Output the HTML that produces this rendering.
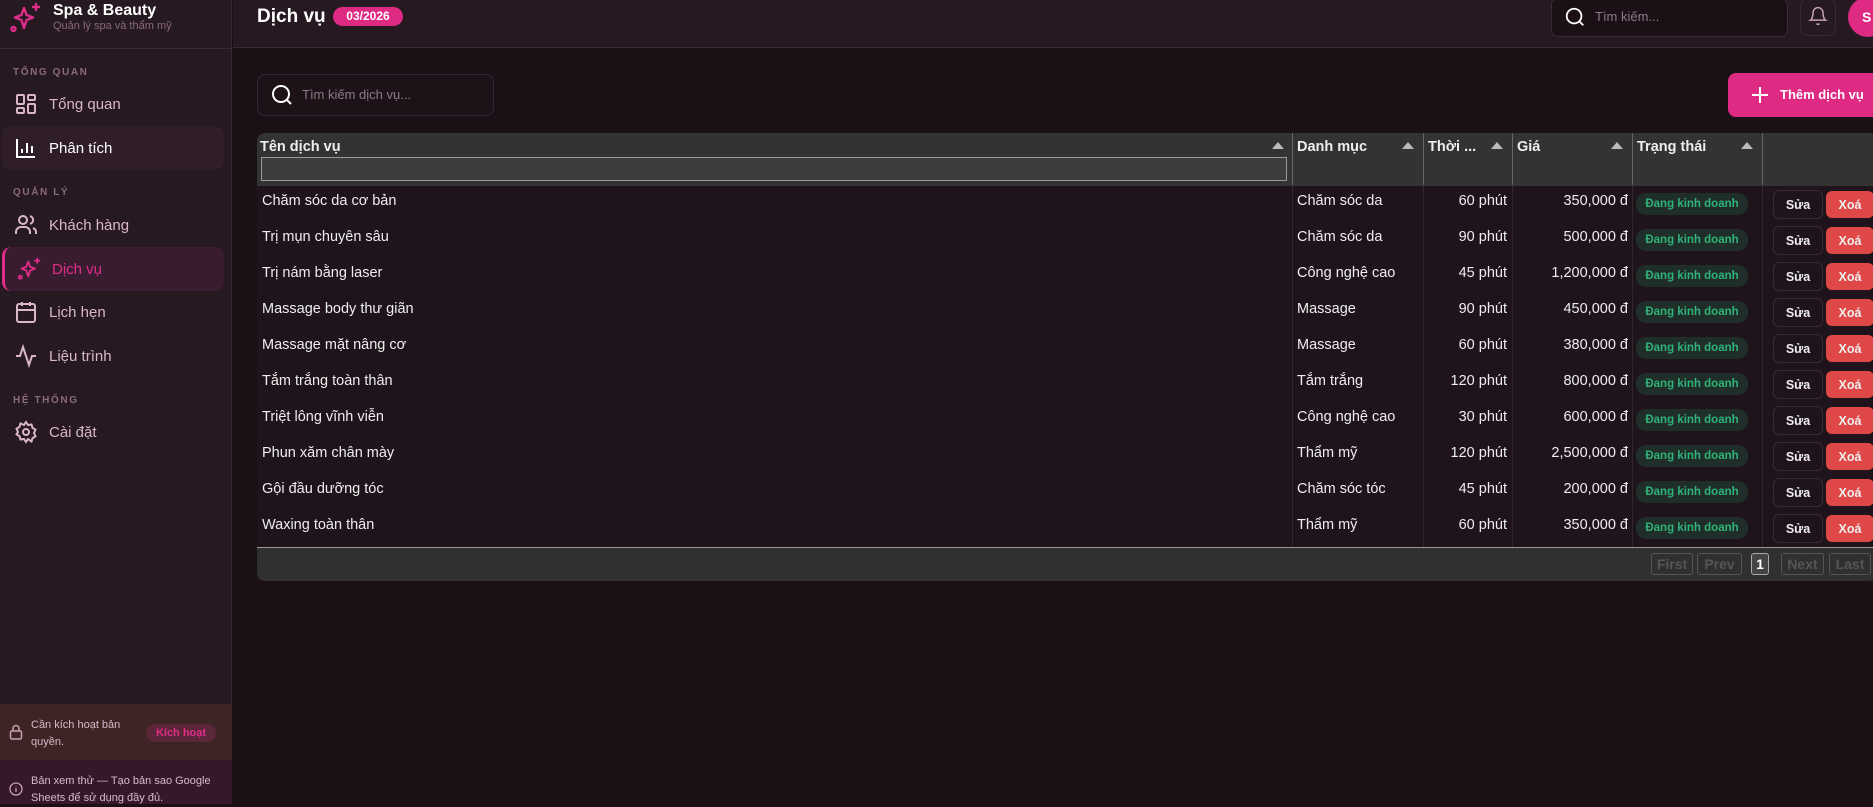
<!DOCTYPE html>
<html><head><meta charset="utf-8"><style>
*{box-sizing:border-box;margin:0;padding:0}
body{width:1873px;height:804px;overflow:hidden;background:#1b1016;font-family:"Liberation Sans","DejaVu Sans",sans-serif;color:#eee;position:relative}
.abs{position:absolute}
#side{left:0;top:0;width:232px;height:804px;background:#261921;border-right:1px solid #3a2a33}
.lbl{position:absolute;left:13px;font-size:10px;letter-spacing:1.6px;color:#8a6a7c;font-weight:bold}
.nav{position:absolute;left:2px;width:222px;height:44px;border-radius:9px;display:flex;align-items:center;font-size:15px;color:#d9b7c9}
.nav svg{position:absolute;left:12px;width:24px;height:24px}
.nav span{position:absolute;left:47px}
#hdr{left:233px;top:0;width:1640px;height:48px;background:#261921;border-bottom:1px solid #3a2a33}
.c{position:absolute;top:0;height:36px;display:flex;align-items:center;white-space:nowrap;font-size:14.5px}
.pill{background:#1f2e29;color:#2fb27a;font-size:11.5px;font-weight:bold;border-radius:10px;height:22px;width:112px;justify-content:center}
.sua{border:1px solid #3a2a33;border-radius:6px;height:29px;width:50px;justify-content:center;font-weight:bold;font-size:12.5px}
.xoa{background:#e04848;border-radius:6px;height:27px;width:48px;justify-content:center;font-weight:bold;font-size:12.5px}
.pg{position:absolute;height:22px;border:1px solid #555;border-radius:3px;color:#555;font-weight:bold;font-size:14px;display:flex;align-items:center;justify-content:center}
.th{position:absolute;top:0;height:52px;border-left:1px solid #666;font-weight:bold;font-size:14.5px;padding:6px 4px}
.tri{position:absolute;top:9px;width:0;height:0;border-left:6px solid transparent;border-right:6px solid transparent;border-bottom:7px solid #bbb}
</style></head><body>
<div id="side" class="abs">
  <svg class="abs" style="left:9px;top:2px" width="32" height="32" viewBox="0 0 32 32" fill="none" stroke="#e02d87" stroke-width="2.4" stroke-linecap="round" stroke-linejoin="round"><path d="M15 6 L17.5 13 L24 15.5 L17.5 18 L15 26 L12.5 18 L6 15.5 L12.5 13 Z"/><path d="M27 2v6M24 5h6"/><circle cx="4.5" cy="27" r="2"/></svg>
  <div class="abs" style="left:53px;top:2px;font-size:16px;font-weight:bold;color:#fff">Spa &amp; Beauty</div>
  <div class="abs" style="left:53px;top:20px;font-size:11px;color:#8a6a7c">Quản lý spa và thẩm mỹ</div>
  <div class="abs" style="left:0;top:48px;width:232px;height:1px;background:#3a2a33"></div>
  <div class="lbl" style="top:67px">TỔNG QUAN</div>
  <div class="nav" style="top:82px"><svg viewBox="0 0 24 24" fill="none" stroke="#d9b7c9" stroke-width="2"><rect x="3" y="3" width="7" height="9" rx="1"/><rect x="14" y="3" width="7" height="5" rx="1"/><rect x="14" y="12" width="7" height="9" rx="1"/><rect x="3" y="16" width="7" height="5" rx="1"/></svg><span>Tổng quan</span></div>
  <div class="nav" style="top:126px;background:#2f1e2a;color:#fff"><svg viewBox="0 0 24 24" fill="none" stroke="#fff" stroke-width="2"><path d="M3 3v18h18M8 17v-4M13 17V7M18 17v-7"/></svg><span>Phân tích</span></div>
  <div class="lbl" style="top:187px">QUẢN LÝ</div>
  <div class="nav" style="top:203px"><svg viewBox="0 0 24 24" fill="none" stroke="#d9b7c9" stroke-width="2"><circle cx="9" cy="7" r="4"/><path d="M2 21v-2a5 5 0 0 1 5-5h4a5 5 0 0 1 5 5v2M16 3.1a4 4 0 0 1 0 7.8M22 21v-2a4 4 0 0 0-3-3.9"/></svg><span>Khách hàng</span></div>
  <div class="nav" style="top:247px;background:#3a1c30;color:#e02d87;border-left:3px solid #e02d87"><svg viewBox="0 0 32 32" fill="none" stroke="#e02d87" stroke-width="2.4" stroke-linecap="round" stroke-linejoin="round"><path d="M15 6 L17.5 13 L24 15.5 L17.5 18 L15 26 L12.5 18 L6 15.5 L12.5 13 Z"/><path d="M27 2v6M24 5h6"/><circle cx="4.5" cy="27" r="2"/></svg><span>Dịch vụ</span></div>
  <div class="nav" style="top:290px"><svg viewBox="0 0 24 24" fill="none" stroke="#d9b7c9" stroke-width="2"><rect x="3" y="4" width="18" height="18" rx="2"/><path d="M16 2v4M8 2v4M3 10h18"/></svg><span>Lịch hẹn</span></div>
  <div class="nav" style="top:334px"><svg viewBox="0 0 24 24" fill="none" stroke="#d9b7c9" stroke-width="2"><path d="M22 12h-4l-3 9L9 3l-3 9H2"/></svg><span>Liệu trình</span></div>
  <div class="lbl" style="top:395px">HỆ THỐNG</div>
  <div class="nav" style="top:410px"><svg viewBox="0 0 24 24" fill="none" stroke="#d9b7c9" stroke-width="2"><circle cx="12" cy="12" r="3"/><path d="M12 2l2 3 3.5-.5 1 3.4 3 1.8-1.5 3.3 1.5 3.3-3 1.8-1 3.4L14 19l-2 3-2-3-3.5.5-1-3.4-3-1.8L4 12 2.5 8.7l3-1.8 1-3.4L10 5z"/></svg><span>Cài đặt</span></div>
  <div class="abs" style="left:0;top:704px;width:232px;height:56px;background:#3d2526"></div>
  <svg class="abs" style="left:9px;top:724px" width="14" height="16" viewBox="0 0 14 16" fill="none" stroke="#c9a0b4" stroke-width="1.5"><rect x="1.5" y="7" width="11" height="8" rx="1.5"/><path d="M4 7V4.5a3 3 0 0 1 6 0V7"/></svg>
  <div class="abs" style="left:31px;top:717px;font-size:11px;line-height:17px;color:#d8b8c8">Cần kích hoạt bản<br>quyền.</div>
  <div class="abs" style="left:146px;top:724px;width:70px;height:18px;border-radius:9px;background:#5a2638;color:#e02d87;font-size:11px;font-weight:bold;text-align:center;line-height:18px">Kích hoạt</div>
  <div class="abs" style="left:0;top:760px;width:232px;height:44px;background:#35192b"></div>
  <svg class="abs" style="left:9px;top:782px" width="14" height="14" viewBox="0 0 14 14" fill="none" stroke="#c9a0b4" stroke-width="1.3"><circle cx="7" cy="7" r="6"/><path d="M7 6v4M7 4v.5"/></svg>
  <div class="abs" style="left:31px;top:773px;font-size:11px;line-height:17px;color:#d8b8c8">Bản xem thử — Tạo bản sao Google<br>Sheets để sử dụng đầy đủ.</div>
</div>
<div id="hdr" class="abs"></div>
<div class="abs" style="left:257px;top:6px;font-size:19px;font-weight:bold;color:#fff">Dịch vụ</div>
<div class="abs" style="left:333px;top:7px;width:70px;height:19px;border-radius:10px;background:#de2a82;color:#fff;font-size:12px;font-weight:bold;text-align:center;line-height:19px">03/2026</div>
<div class="abs" style="left:1551px;top:-2px;width:237px;height:39px;border:1px solid #3a2a33;border-radius:7px;background:#1b1016"></div>
<svg class="abs" style="left:1564px;top:6px" width="22" height="22" viewBox="0 0 24 24" fill="none" stroke="#fff" stroke-width="2"><circle cx="11" cy="11" r="8"/><path d="M21 21l-4.3-4.3"/></svg>
<div class="abs" style="left:1595px;top:9px;font-size:13px;color:#8d7a84">Tìm kiếm...</div>
<div class="abs" style="left:1800px;top:-2px;width:36px;height:38px;border:1px solid #3a2a33;border-radius:8px"></div>
<svg class="abs" style="left:1808px;top:5px" width="20" height="22" viewBox="0 0 24 24" fill="none" stroke="#c9a0b4" stroke-width="1.8"><path d="M6 8a6 6 0 0 1 12 0c0 7 3 9 3 9H3s3-2 3-9M10.3 21a1.9 1.9 0 0 0 3.4 0"/></svg>
<div class="abs" style="left:1848px;top:-3px;width:40px;height:40px;border-radius:50%;background:#de2a82;color:#fff;font-weight:bold;font-size:14px;line-height:40px;padding-left:14px">S</div>

<div class="abs" style="left:257px;top:74px;width:237px;height:42px;border:1px solid #36262f;border-radius:8px;background:#1d1218"></div>
<svg class="abs" style="left:270px;top:83px" width="24" height="24" viewBox="0 0 24 24" fill="none" stroke="#fff" stroke-width="2"><circle cx="11" cy="11" r="8"/><path d="M21 21l-4.3-4.3"/></svg>
<div class="abs" style="left:302px;top:87px;font-size:13px;color:#8d7a84">Tìm kiếm dịch vụ...</div>
<div class="abs" style="left:1728px;top:73px;width:160px;height:44px;border-radius:8px;background:#de2a82"></div>
<svg class="abs" style="left:1750px;top:85px" width="20" height="20" viewBox="0 0 20 20" stroke="#fff" stroke-width="2"><path d="M10 2v16M2 10h16"/></svg>
<div class="abs" style="left:1780px;top:87px;font-size:13px;font-weight:bold;color:#fff">Thêm dịch vụ</div>

<div class="abs" style="left:257px;top:133px;width:1620px;height:448px;border-radius:8px;overflow:hidden;background:#1f141b">
  <div class="abs" style="left:0;top:0;width:1620px;height:53px;background:#333"></div>
  <div class="th" style="left:-1px;width:1036px;border-left:none">Tên dịch vụ<div class="tri" style="left:1016px"></div>
    <div class="abs" style="left:5px;top:24px;width:1026px;height:24px;border:1px solid #999;background:#3d3d3d"></div></div>
  <div class="th" style="left:1035px;width:131px">Danh mục<div class="tri" style="left:109px"></div></div>
  <div class="th" style="left:1166px;width:89px">Thời ...<div class="tri" style="left:67px"></div></div>
  <div class="th" style="left:1255px;width:120px">Giá<div class="tri" style="left:98px"></div></div>
  <div class="th" style="left:1375px;width:130px">Trạng thái<div class="tri" style="left:108px"></div></div>
  <div class="th" style="left:1505px;width:120px"></div>
  <div class="abs" style="left:1035px;top:53px;width:1px;height:361px;background:#33252e"></div>
  <div class="abs" style="left:1166px;top:53px;width:1px;height:361px;background:#33252e"></div>
  <div class="abs" style="left:1255px;top:53px;width:1px;height:361px;background:#33252e"></div>
  <div class="abs" style="left:1375px;top:53px;width:1px;height:361px;background:#33252e"></div>
  <div class="abs" style="left:1505px;top:53px;width:1px;height:361px;background:#33252e"></div>
  <div id="rows" class="abs" style="left:0;top:49px;width:1620px"></div>
  <div class="abs" style="left:0;top:414px;width:1620px;height:34px;background:#303030;border-top:1px solid #999"></div>
  <div class="pg" style="left:1394px;top:420px;width:42px">First</div>
  <div class="pg" style="left:1440px;top:420px;width:45px">Prev</div>
  <div class="pg" style="left:1494px;top:420px;width:18px;color:#fff;border-color:#aaa;background:#444">1</div>
  <div class="pg" style="left:1524px;top:420px;width:43px">Next</div>
  <div class="pg" style="left:1572px;top:420px;width:42px">Last</div>
</div>
<script>
var d=[["Chăm sóc da cơ bản","Chăm sóc da","60","350,000"],["Trị mụn chuyên sâu","Chăm sóc da","90","500,000"],["Trị nám bằng laser","Công nghệ cao","45","1,200,000"],["Massage body thư giãn","Massage","90","450,000"],["Massage mặt nâng cơ","Massage","60","380,000"],["Tắm trắng toàn thân","Tắm trắng","120","800,000"],["Triệt lông vĩnh viễn","Công nghệ cao","30","600,000"],["Phun xăm chân mày","Thẩm mỹ","120","2,500,000"],["Gội đầu dưỡng tóc","Chăm sóc tóc","45","200,000"],["Waxing toàn thân","Thẩm mỹ","60","350,000"]];
var h="";d.forEach(function(r,i){var t=1+i*36;
h+='<div class="c" style="left:5px;top:'+t+'px">'+r[0]+'</div><div class="c" style="left:1040px;top:'+t+'px">'+r[1]+'</div>'+
'<div class="c" style="left:1166px;width:84px;justify-content:flex-end;top:'+t+'px">'+r[2]+' phút</div>'+
'<div class="c" style="left:1255px;width:116px;justify-content:flex-end;top:'+t+'px">'+r[3]+' đ</div>'+
'<div class="c pill" style="left:1379px;top:'+(t+10)+'px">Đang kinh doanh</div>'+
'<div class="c sua" style="left:1516px;top:'+(t+7)+'px">Sửa</div><div class="c xoa" style="left:1569px;top:'+(t+8)+'px">Xoá</div>';});
document.getElementById("rows").innerHTML=h;
</script>
</body></html>
